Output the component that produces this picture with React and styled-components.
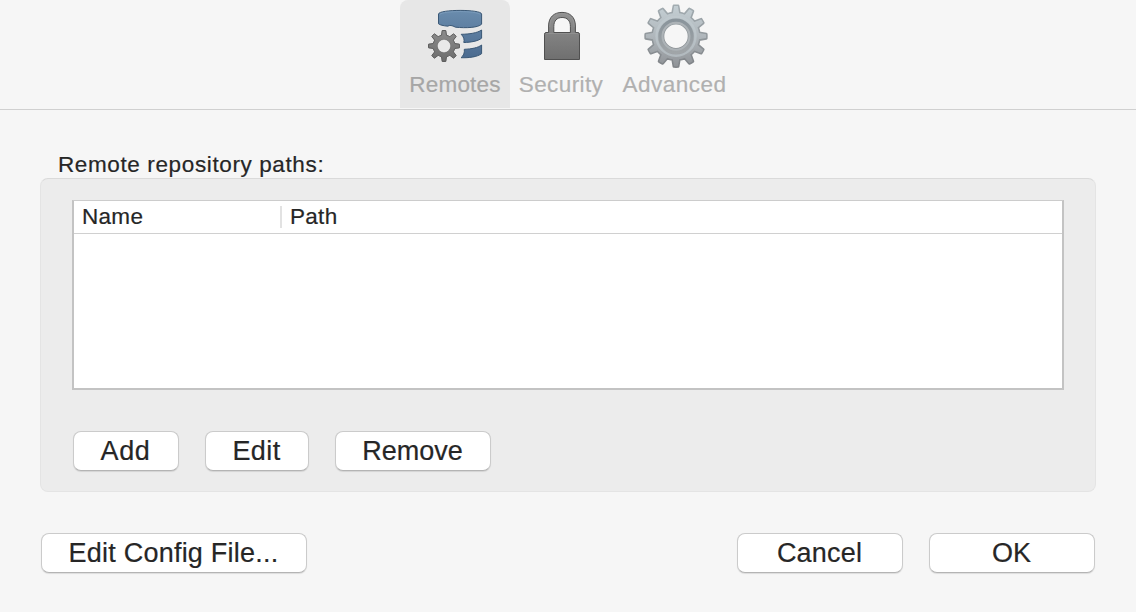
import React from "react";
import styled, { createGlobalStyle } from "styled-components";

const GlobalStyle = createGlobalStyle`
  * { box-sizing: border-box; }
  body {
    margin: 0;
    background: #f6f6f6;
    color: #262626;
    font-family: "Liberation Sans", Arial, sans-serif;
    -webkit-text-stroke: 0.2px currentColor;
  }
`;

const Window = styled.div`
  width: 1136px;
  height: 612px;
  overflow: hidden;
  display: flex;
  flex-direction: column;
  background: #f6f6f6;
`;

const Toolbar = styled.nav`
  height: 110px;
  flex: none;
  display: flex;
  padding-left: 400px;
  border-bottom: 1px solid #d0d0d0;
`;

const Tab = styled.div`
  width: ${(p) => p.$width}px;
  height: 108px;
  display: flex;
  flex-direction: column;
  align-items: center;
  border-radius: 8px 8px 0 0;
  background: ${(p) => (p.$active ? "#e7e7e7" : "transparent")};
  color: ${(p) => (p.$active ? "#a6a6a6" : "#b0b0b0")};

  svg { display: block; flex: none; }
`;

const TabLabel = styled.span`
  font-size: 22.5px;
  line-height: 30px;
  letter-spacing: ${(p) => p.$spacing}px;
  white-space: nowrap;
`;

const Content = styled.main`
  padding: 40px 40px 0;
  display: flex;
  flex-direction: column;
`;

const GroupTitle = styled.h1`
  margin: 0;
  padding: 1px 0 0 18px;
  height: 28px;
  font-size: 22.5px;
  font-weight: 400;
  line-height: 28px;
  letter-spacing: 0.62px;
`;

const Group = styled.section`
  height: 314px;
  padding: 21px 31px 0;
  background: #ececec;
  border: 1px solid #e4e4e4;
  border-top-color: #dadada;
  border-radius: 8px;
`;

const Table = styled.div`
  height: 190px;
  background: #fff;
  border: 2px solid #c3c3c3;
  border-top: 1px solid #cccccc;
`;

const HeaderRow = styled.div`
  height: 33px;
  display: flex;
  align-items: center;
  border-bottom: 1px solid #d0d0d0;
`;

const HeaderCell = styled.div`
  width: ${(p) => p.$width};
  height: 22px;
  padding-left: 8px;
  border-right: ${(p) => (p.$divided ? "2px solid #e2e2e2" : "none")};
  font-size: 22.5px;
  line-height: 22px;
  letter-spacing: ${(p) => p.$spacing}px;
`;

const ButtonRow = styled.div`
  display: flex;
  gap: 26px;
  margin-top: 41px;
  padding-left: 1px;
`;

const Footer = styled.footer`
  display: flex;
  gap: 26px;
  margin-top: 41px;
  padding: 0 1px;
`;

const Spacer = styled.div`
  flex: 1;
`;

const Button = styled.button`
  width: ${(p) => p.$width}px;
  height: 40px;
  padding: 0 1px 0 0;
  border: 1px solid #cbcbcb;
  border-bottom-color: #b4b4b4;
  border-radius: 8px;
  background: #fff;
  box-shadow: 0 1px 1px rgba(0, 0, 0, 0.1);
  color: #262626;
  font-family: inherit;
  font-size: 27px;
  line-height: 36px;
  letter-spacing: ${(p) => p.$spacing}px;
  text-align: center;
  white-space: nowrap;
  -webkit-text-stroke: 0.2px currentColor;
`;

// Outline of a cog: straight-sided teeth joined by arcs along the root circle.
function cogPath(cx, cy, teeth, outer, root, hole, tipWidth, rootWidth) {
  const step = (Math.PI * 2) / teeth;
  const at = (r, a) =>
    `${(cx + r * Math.cos(a)).toFixed(2)} ${(cy + r * Math.sin(a)).toFixed(2)}`;
  let d = "";
  for (let i = 0; i < teeth; i += 1) {
    const a = -Math.PI / 2 + i * step;
    d += `${i ? `A${root} ${root} 0 0 1 ` : "M"}${at(root, a - step * rootWidth)}`;
    d += `L${at(outer, a - step * tipWidth)}`;
    d += `A${outer} ${outer} 0 0 1 ${at(outer, a + step * tipWidth)}`;
    d += `L${at(root, a + step * rootWidth)}`;
  }
  d += `A${root} ${root} 0 0 1 ${at(root, -Math.PI / 2 - step * rootWidth)}Z`;
  d += `M${cx + hole} ${cy}A${hole} ${hole} 0 1 0 ${cx - hole} ${cy}A${hole} ${hole} 0 1 0 ${cx + hole} ${cy}Z`;
  return d;
}

const RemotesIcon = () => (
  <svg width="110" height="70" viewBox="0 0 110 70">
    <defs>
      <linearGradient id="db" x1="0" y1="10" x2="0" y2="59" gradientUnits="userSpaceOnUse">
        <stop offset="0" stopColor="#6a8cad" />
        <stop offset="1" stopColor="#4a6a8f" />
      </linearGradient>
      <linearGradient id="cog" x1="0" y1="30" x2="0" y2="62" gradientUnits="userSpaceOnUse">
        <stop offset="0" stopColor="#8c8c8c" />
        <stop offset="1" stopColor="#6c6c6c" />
      </linearGradient>
    </defs>
    <g fill="url(#db)" stroke="#3a5876" strokeWidth="1" strokeLinejoin="round">
      <path d="M38.5 14C39 9.2 81.3 9.2 81.6 14V24.2C78 27.8 66 28.2 55.5 27.2C52 25.2 49.5 25 47.8 26.2C43.5 25.8 39.8 25 38.5 23.8Z" />
      <path d="M61.2 34.3C69 34.2 77.5 33 81.6 30V38.2C77.8 41.2 71 42.3 63.8 42.5C64.7 39.6 63.6 36.7 61.2 34.3Z" />
      <path d="M64.3 49.3C71.5 49 78 47.8 81.6 45V53.7C77 57 69 58 61 57.7C63.5 55.8 64.8 52.8 64.3 49.3Z" />
    </g>
    <path d="M39.8 14.4C44 10.6 76 10.6 80.3 14.4" fill="none" stroke="#7c9dbc" strokeWidth="0.8" />
    <path
      d={cogPath(44, 46, 8, 15.5, 11, 6.2, 0.155, 0.29)}
      fill="url(#cog)"
      fillRule="evenodd"
      stroke="#5c5c5c"
      strokeWidth="1"
      strokeLinejoin="round"
    />
    <circle cx="44" cy="46" r="6" fill="#e9e9e9" stroke="#f2f2f2" strokeWidth="0.7" />
  </svg>
);

const LockIcon = () => (
  <svg width="102" height="70" viewBox="0 0 102 70">
    <defs>
      <linearGradient id="lock" x1="0" y1="12" x2="0" y2="60" gradientUnits="userSpaceOnUse">
        <stop offset="0" stopColor="#929292" />
        <stop offset="1" stopColor="#6f6f6f" />
      </linearGradient>
    </defs>
    <path
      d="M38.6 32.5V26C38.6 17.2 44 12.4 52 12.4S65.4 17.2 65.4 26V32.5H68Q69.5 32.7 69.5 34.2V59.5H34.5V34.2Q34.5 32.7 36 32.5ZM43.8 32.5H60.4V26.5C60.4 20.7 57.3 17.5 52.1 17.5S43.8 20.7 43.8 26.5Z"
      fill="url(#lock)"
      fillRule="evenodd"
      stroke="#505050"
      strokeWidth="1"
      strokeLinejoin="round"
    />
    <path d="M36 33.5H68M39.8 27C39.8 18 44.5 13.6 52 13.6S64.2 18 64.2 27" fill="none" stroke="#9a9a9a" strokeWidth="0.6" />
  </svg>
);

const AdvancedIcon = () => (
  <svg width="125" height="70" viewBox="0 0 125 70">
    <defs>
      <linearGradient id="steel" x1="0" y1="4" x2="0" y2="68" gradientUnits="userSpaceOnUse">
        <stop offset="0" stopColor="#c5d0d5" />
        <stop offset="0.5" stopColor="#b0b7bc" />
        <stop offset="1" stopColor="#8e9195" />
      </linearGradient>
      <linearGradient id="rim" x1="0" y1="4" x2="0" y2="68" gradientUnits="userSpaceOnUse">
        <stop offset="0" stopColor="#a3adb2" />
        <stop offset="1" stopColor="#7f8286" />
      </linearGradient>
      <linearGradient id="bevel" x1="0" y1="18" x2="0" y2="55" gradientUnits="userSpaceOnUse">
        <stop offset="0" stopColor="#88939a" />
        <stop offset="1" stopColor="#a2a6a9" />
      </linearGradient>
      <filter id="soft" x="-5%" y="-5%" width="110%" height="110%">
        <feGaussianBlur stdDeviation="0.6" />
      </filter>
    </defs>
    <g filter="url(#soft)">
      <path
        d={cogPath(64, 36.2, 12, 30.4, 23.4, 13, 0.135, 0.28)}
        fill="url(#steel)"
        fillRule="evenodd"
        stroke="url(#rim)"
        strokeWidth="2.6"
        strokeLinejoin="round"
      />
      <path
        d={cogPath(64, 36.2, 12, 30.2, 23.2, 13, 0.12, 0.26)}
        fill="url(#steel)"
        fillRule="evenodd"
      />
      <circle cx="64" cy="36.2" r="19.5" fill="none" stroke="#c2ccd1" strokeWidth="2.4" opacity="0.6" />
      <circle cx="64" cy="36.2" r="15.8" fill="none" stroke="url(#bevel)" strokeWidth="3.8" />
      <circle cx="64" cy="36.2" r="13.5" fill="none" stroke="#adb3b7" strokeWidth="2" />
    </g>
  </svg>
);

export default function App() {
  return (
    <>
      <GlobalStyle />
      <Window>
        <Toolbar>
          <Tab $width={110} $active>
            <RemotesIcon />
            <TabLabel $spacing={0.2}>Remotes</TabLabel>
          </Tab>
          <Tab $width={102}>
            <LockIcon />
            <TabLabel $spacing={0.4}>Security</TabLabel>
          </Tab>
          <Tab $width={125}>
            <AdvancedIcon />
            <TabLabel $spacing={0.5}>Advanced</TabLabel>
          </Tab>
        </Toolbar>
        <Content>
          <GroupTitle>Remote repository paths:</GroupTitle>
          <Group>
            <Table>
              <HeaderRow>
                <HeaderCell $width="208px" $divided $spacing={0.3}>Name</HeaderCell>
                <HeaderCell $width="auto" $spacing={0.3}>Path</HeaderCell>
              </HeaderRow>
            </Table>
            <ButtonRow>
              <Button $width={106} $spacing={0.6}>Add</Button>
              <Button $width={104} $spacing={0.4}>Edit</Button>
              <Button $width={156} $spacing={0}>Remove</Button>
            </ButtonRow>
          </Group>
          <Footer>
            <Button $width={266} $spacing={0.22}>Edit Config File...</Button>
            <Spacer />
            <Button $width={166} $spacing={0.2}>Cancel</Button>
            <Button $width={166} $spacing={0}>OK</Button>
          </Footer>
        </Content>
      </Window>
    </>
  );
}
